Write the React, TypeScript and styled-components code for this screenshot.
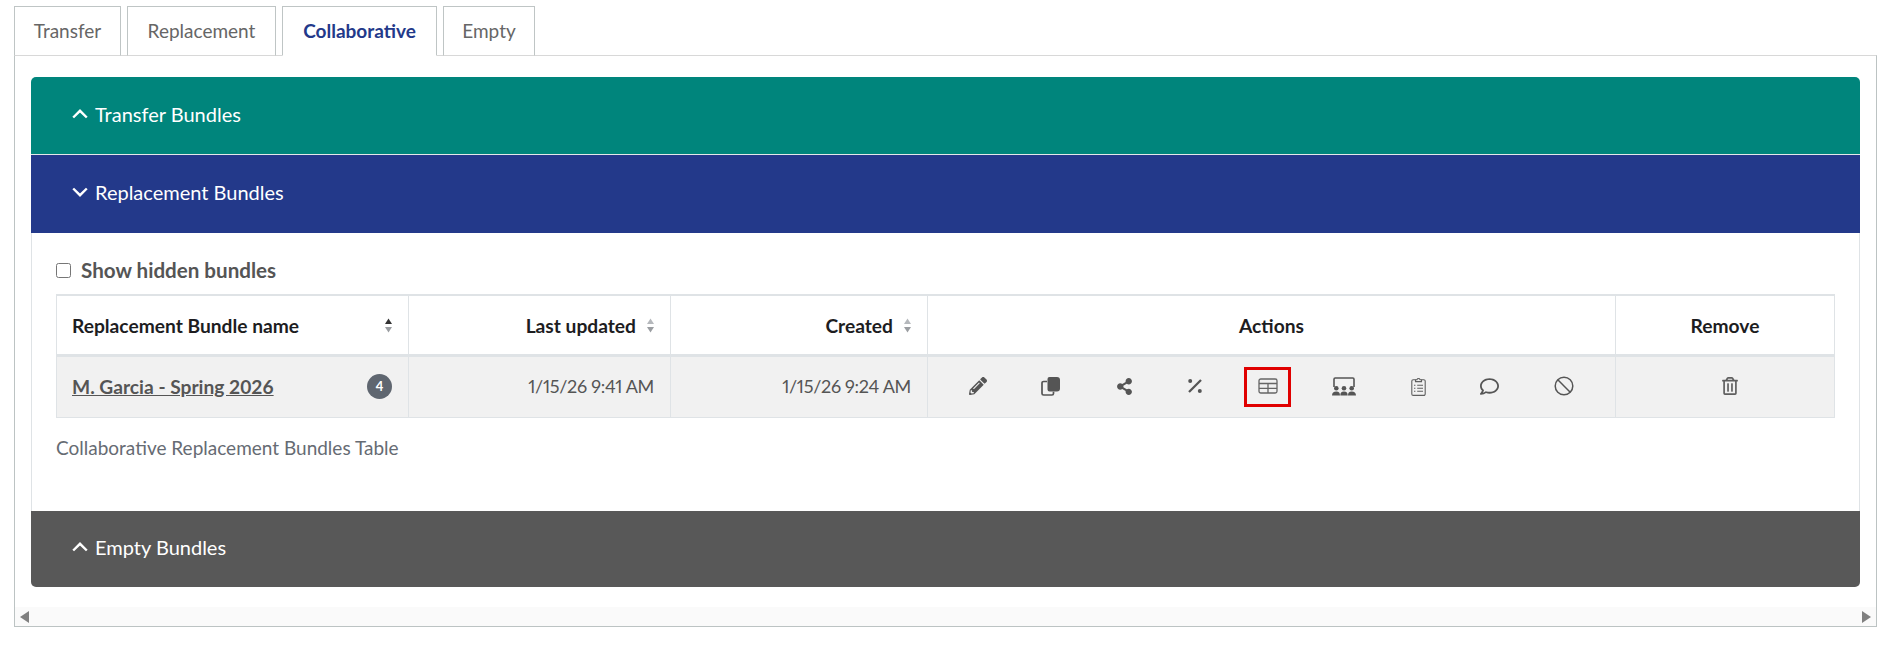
import React from "react";
import styled, { createGlobalStyle } from "styled-components";
import { FaPencilAlt, FaShareAlt, FaRegComment, FaRegTrashAlt } from "react-icons/fa";

const Global = createGlobalStyle`
  html, body { margin: 0; padding: 0; background: #fff; }
  body { font-family: Lato, "Liberation Sans", sans-serif; color: #555; }
`;

const Page = styled.div`
  padding: 6px 8px 0 14px;
`;
const TabBar = styled.div`
  display: flex;
  gap: 6px;
  position: relative;
  z-index: 1;
  margin-bottom: -1px;
`;
const Tab = styled.div<{ $active?: boolean; $w: number }>`
  box-sizing: border-box;
  width: ${(p) => p.$w}px;
  height: 50px;
  padding-bottom: 2px;
  display: flex;
  align-items: center;
  justify-content: center;
  font-size: 19px;
  font-weight: ${(p) => (p.$active ? 700 : 400)};
  color: ${(p) => (p.$active ? "#23398a" : "#666")};
  background: #fff;
  border: 1px solid #bfc5c5;
  border-bottom: 1px solid ${(p) => (p.$active ? "#fff" : "#d8d8d8")};
`;
const Panel = styled.div`
  box-sizing: border-box;
  height: 572px;
  border: 1px solid #bcc3c3;
  border-top-color: #d8d8d8;
  display: flex;
  flex-direction: column;
  padding-top: 21px;
`;
const Accordion = styled.div`
  margin: 0 16px;
  display: flex;
  flex-direction: column;
  border-radius: 4px;
`;
const Head = styled.div<{ $bg: string; $first?: boolean; $last?: boolean }>`
  box-sizing: border-box;
  height: ${(p) => (p.$last ? 76 : 77)}px;
  flex: none;
  background: ${(p) => p.$bg};
  color: #fff;
  display: flex;
  align-items: center;
  gap: 7px;
  padding: 0 0 4px 41px;
  font-size: 20px;
  font-weight: 400;
  border-radius: ${(p) => (p.$first ? "5px 5px 0 0" : p.$last ? "0 0 5px 5px" : "0")};
  & + & {
    height: 79px;
    border-top: 1px solid #e4e8e8;
  }
`;
const Body = styled.div`
  box-sizing: border-box;
  height: 278px;
  flex: none;
  padding: 22px 24px 0;
  border-left: 1px solid #dfe3e6;
  border-right: 1px solid #dfe3e6;
`;
const CheckRow = styled.label`
  display: flex;
  align-items: center;
  gap: 10px;
  height: 30px;
  margin-bottom: 9px;
  font-size: 20.6px;
  font-weight: 700;
  color: #555;
`;
const Box = styled.span`
  width: 13px;
  height: 13px;
  border: 1px solid #767676;
  border-radius: 2.5px;
  background: #fff;
  flex: none;
`;
const Table = styled.table`
  width: 1779px;
  table-layout: fixed;
  border-collapse: separate;
  border-spacing: 0;
  border: 1px solid #dfe3e6;
  border-top: 2px solid #dfe3e6;
`;
const Th = styled.th<{ $align?: string }>`
  height: 61px;
  padding: 0 15px;
  box-sizing: border-box;
  font-size: 19.2px;
  font-weight: 700;
  color: #1d1d1f;
  text-align: ${(p) => p.$align || "left"};
  border-left: 1px solid #dfe3e6;
  border-bottom: 3px solid #dfe3e6;
  &:first-child {
    border-left: none;
  }
`;
const ThInner = styled.div<{ $between?: boolean }>`
  display: flex;
  align-items: center;
  justify-content: ${(p) => (p.$between ? "space-between" : "flex-end")};
  gap: 10px;
`;
const Td = styled.td<{ $align?: string }>`
  height: 60px;
  padding: 0 16px 2px 15px;
  box-sizing: border-box;
  background: #f1f1f1;
  font-size: 18px;
  color: #555;
  text-align: ${(p) => p.$align || "left"};
  border-left: 1px solid #dfe3e6;
  &:first-child {
    border-left: none;
  }
`;
const DateText = styled.span`
  font-feature-settings: "pnum";
  letter-spacing: -0.3px;
`;
const NameCell = styled.div`
  display: flex;
  align-items: center;
  justify-content: space-between;
`;
const NameLink = styled.a`
  font-size: 19.2px;
  font-weight: 700;
  text-decoration: underline;
  color: #555;
`;
const Badge = styled.span`
  width: 25px;
  height: 25px;
  border-radius: 50%;
  background: #5f6670;
  color: #fff;
  font-size: 13px;
  font-weight: 700;
  display: flex;
  align-items: center;
  justify-content: center;
`;
const Caption = styled.div`
  margin-top: 18px;
  font-size: 19px;
  color: #666b73;
`;
const Actions = styled.div`
  display: flex;
  align-items: center;
  justify-content: center;
`;
const IconBtn = styled.span`
  padding: 0 27.25px;
  display: flex;
  align-items: center;
  color: #555;
`;
const Highlight = styled.span`
  display: flex;
  position: relative;
  &::after {
    content: "";
    position: absolute;
    inset: -11px -13.5px -13px;
    border: 3px solid #e00000;
  }
`;
const TrashCell = styled.span`
  display: inline-flex;
  vertical-align: middle;
  margin: 0 0 3px 10px;
  color: #5f5f5f;
`;
const ScrollBar = styled.div`
  box-sizing: border-box;
  height: 19px;
  margin-top: auto;
  flex: none;
  background: #fafafa;
  display: flex;
  align-items: center;
  justify-content: space-between;
  padding: 0 5px;
`;
const Arrow = styled.span<{ $right?: boolean }>`
  width: 0;
  height: 0;
  border-top: 6px solid transparent;
  border-bottom: 6px solid transparent;
  ${(p) => (p.$right ? "border-left: 9px solid #808080;" : "border-right: 9px solid #808080;")}
`;

const Chevron = ({ down }: { down?: boolean }) => (
  <svg width="16" height="10" viewBox="0 0 16 10" fill="none" stroke="#fff" strokeWidth="2.4">
    <path d={down ? "M1.2 1.5 8 8.2 14.8 1.5" : "M1.2 8.5 8 1.8 14.8 8.5"} />
  </svg>
);
const Sort = ({ dark }: { dark?: boolean }) => (
  <svg width="9" height="17" viewBox="0 0 9 17">
    <path d="M4.5 1.5 8 7H1Z" fill={dark ? "#333" : "#b5b8bc"} />
    <path d="M4.5 15.5 1 10H8Z" fill="#9a9da1" />
  </svg>
);

const CopyIcon = () => (
  <svg width="20" height="20" viewBox="0 0 20 20">
    <path d="M6 5.5H2.6A1.6 1.6 0 0 0 1 7.1v10.3A1.6 1.6 0 0 0 2.6 19h8.3a1.6 1.6 0 0 0 1.6-1.6v-1.6" fill="none" stroke="#555" strokeWidth="1.7" />
    <path d="M8.5 1h7.5A3 3 0 0 1 19 4v8.5a3 3 0 0 1-3 3H8.5a2 2 0 0 1-2-2V3a2 2 0 0 1 2-2Z" fill="#555" />
  </svg>
);
const PercentIcon = () => (
  <svg width="16" height="16" viewBox="0 0 16 16" fill="#555">
    <path d="M13.2 1.2 14.8 2.8 2.8 14.8 1.2 13.2Z" />
    <circle cx="3.2" cy="3" r="2" />
    <circle cx="12.8" cy="13" r="2" />
  </svg>
);
const TableIcon = () => (
  <svg width="20" height="16" viewBox="0 0 20 16" fill="none" stroke="#666" strokeWidth="1.3">
    <rect x="1" y="1" width="18" height="14" rx="1.8" />
    <path d="M1 5.5H19M1 10.3H19M10 5.5V15" />
  </svg>
);
const GroupIcon = () => (
  <svg width="24" height="19" viewBox="0 0 24 19" fill="#555">
    <path d="M2 10V2.2A1.2 1.2 0 0 1 3.2 1H20.8A1.2 1.2 0 0 1 22 2.2V10" fill="none" stroke="#555" strokeWidth="1.6" />
    <circle cx="4.3" cy="11.3" r="2.3" />
    <circle cx="12" cy="11.3" r="2.3" />
    <circle cx="19.7" cy="11.3" r="2.3" />
    <path d="M0 18.5C0 15.5 1.6 14.4 4.3 14.4S8 15.5 8 18.5ZM8.3 18.5C8.3 15.5 9.3 14.4 12 14.4S15.7 15.5 15.7 18.5ZM16 18.5C16 15.5 17 14.4 19.7 14.4S24 15.5 24 18.5Z" />
  </svg>
);
const ClipIcon = () => (
  <svg width="15" height="19" viewBox="0 0 15 19" fill="none" stroke="#5f5f5f" strokeWidth="1.1">
    <path d="M4.5 2.7H2.2A1.4 1.4 0 0 0 .8 4.1v12.9a1.4 1.4 0 0 0 1.4 1.4h10.6a1.4 1.4 0 0 0 1.4-1.4V4.1a1.4 1.4 0 0 0-1.4-1.4h-2.3" />
    <path d="M4.5 4.6V2.7h1.4a1.7 1.7 0 0 1 3.2 0h1.4v1.9Z" />
    <path d="M3 8.2h1.4M6.2 8.2H12M3 11.2h1.4M6.2 11.2H12M3 14.2h1.4M6.2 14.2H12" />
  </svg>
);
const BanIcon = () => (
  <svg width="20" height="20" viewBox="0 0 20 20" fill="none" stroke="#555" strokeWidth="1.5">
    <circle cx="10" cy="10" r="8.8" />
    <path d="M3.8 3.8 16.2 16.2" />
  </svg>
);

export default function App() {
  return (
    <Page>
      <Global />
      <TabBar>
        <Tab $w={107}>Transfer</Tab>
        <Tab $w={149}>Replacement</Tab>
        <Tab $w={155} $active>Collaborative</Tab>
        <Tab $w={92}>Empty</Tab>
      </TabBar>
      <Panel>
        <Accordion>
          <Head $bg="#00857c" $first>
            <Chevron />
            Transfer Bundles
          </Head>
          <Head $bg="#23398a">
            <Chevron down />
            Replacement Bundles
          </Head>
          <Body>
            <CheckRow>
              <Box />
              Show hidden bundles
            </CheckRow>
            <Table>
              <colgroup>
                <col style={{ width: 351 }} />
                <col style={{ width: 262 }} />
                <col style={{ width: 257 }} />
                <col style={{ width: 688 }} />
                <col style={{ width: 219 }} />
              </colgroup>
              <thead>
                <tr>
                  <Th>
                    <ThInner $between>
                      Replacement Bundle name
                      <Sort dark />
                    </ThInner>
                  </Th>
                  <Th>
                    <ThInner>
                      Last updated
                      <Sort />
                    </ThInner>
                  </Th>
                  <Th>
                    <ThInner>
                      Created
                      <Sort />
                    </ThInner>
                  </Th>
                  <Th $align="center">Actions</Th>
                  <Th $align="center">Remove</Th>
                </tr>
              </thead>
              <tbody>
                <tr>
                  <Td>
                    <NameCell>
                      <NameLink>M. Garcia - Spring 2026</NameLink>
                      <Badge>4</Badge>
                    </NameCell>
                  </Td>
                  <Td $align="right"><DateText>1/15/26 9:41 AM</DateText></Td>
                  <Td $align="right"><DateText>1/15/26 9:24 AM</DateText></Td>
                  <Td>
                    <Actions>
                      <IconBtn><FaPencilAlt size={18} /></IconBtn>
                      <IconBtn><CopyIcon /></IconBtn>
                      <IconBtn><FaShareAlt size={17} /></IconBtn>
                      <IconBtn><PercentIcon /></IconBtn>
                      <IconBtn><Highlight><TableIcon /></Highlight></IconBtn>
                      <IconBtn><GroupIcon /></IconBtn>
                      <IconBtn><ClipIcon /></IconBtn>
                      <IconBtn><FaRegComment size={19} /></IconBtn>
                      <IconBtn><BanIcon /></IconBtn>
                    </Actions>
                  </Td>
                  <Td $align="center"><TrashCell><FaRegTrashAlt size={18} /></TrashCell></Td>
                </tr>
              </tbody>
            </Table>
            <Caption>Collaborative Replacement Bundles Table</Caption>
          </Body>
          <Head $bg="#585858" $last>
            <Chevron />
            Empty Bundles
          </Head>
        </Accordion>
        <ScrollBar>
          <Arrow />
          <Arrow $right />
        </ScrollBar>
      </Panel>
    </Page>
  );
}
